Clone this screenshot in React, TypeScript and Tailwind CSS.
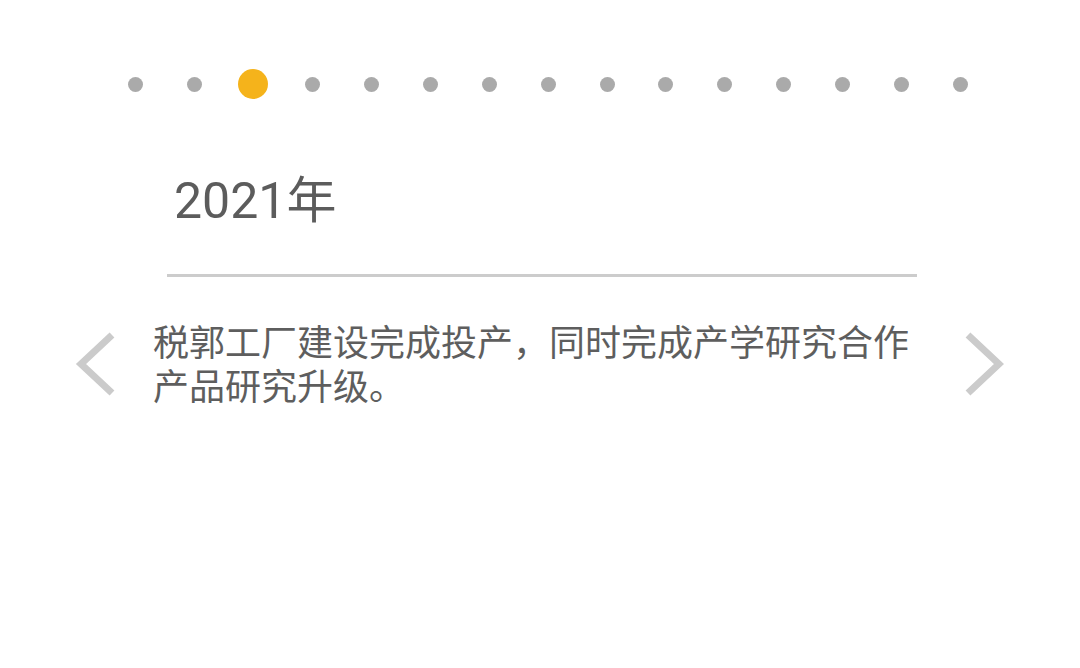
import React from "react";

const font = { fontFamily: '"Noto Sans", "Noto Sans CJK SC", sans-serif' };

export default function App() {
  const active = 2;
  const dots = Array.from({ length: 15 }, (_, i) => i);
  return (
    <div className="w-[1080px] h-[668px] bg-white overflow-hidden" style={font}>
      <div className="flex gap-[28.95px] pl-[120.5px] pt-[69px]">
        {dots.map((i) => (
          <div key={i} className="w-[30px] h-[30px] flex items-center justify-center">
            {i === active ? (
              <div className="w-[30px] h-[30px] rounded-full bg-[#f5b31b]" />
            ) : (
              <div className="w-[15px] h-[15px] rounded-full bg-[#aaaaaa]" />
            )}
          </div>
        ))}
      </div>
      <div
        className="pl-[174px] mt-[78px] h-[49px] text-[50px] leading-[49px] text-[#5c5c5c]"
        style={{ fontFamily: 'Roboto, "Noto Sans CJK SC", sans-serif' }}
      >
        2021年
      </div>
      <div className="ml-[167px] mt-[48px] w-[750px] h-[3px] bg-[#cccccc]" />
      <div className="flex items-center mt-[44px]">
        <svg className="ml-[75px] shrink-0" width="40" height="66" viewBox="0 0 40 66">
          <polyline points="37,3 6,32 37,61" fill="none" stroke="#cbcbcb" strokeWidth="7" strokeLinejoin="miter" />
        </svg>
        <p className="ml-[38px] w-[760px] text-[36px] leading-[44px] text-[#5e5e5e]">
          税郭工厂建设完成投产，同时完成产学研究合作产品研究升级。
        </p>
        <svg className="ml-[51px] shrink-0" width="40" height="66" viewBox="0 0 40 66">
          <polyline points="4,3 35,32 4,61" fill="none" stroke="#cbcbcb" strokeWidth="7" strokeLinejoin="miter" />
        </svg>
      </div>
    </div>
  );
}
